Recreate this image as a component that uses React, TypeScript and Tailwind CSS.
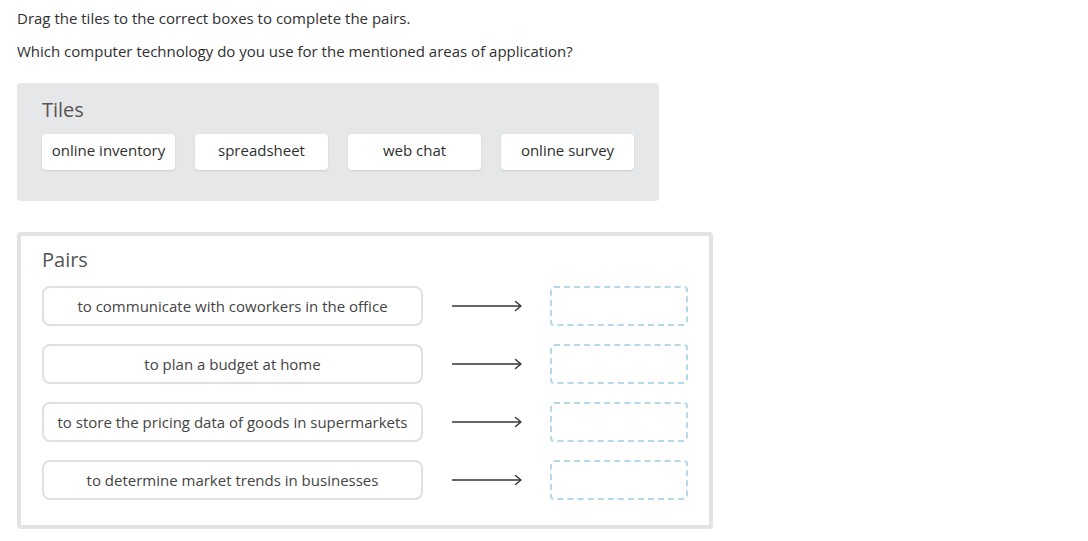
import React from 'react';

const tiles = ['online inventory', 'spreadsheet', 'web chat', 'online survey'];

const pairs = [
  'to communicate with coworkers in the office',
  'to plan a budget at home',
  'to store the pricing data of goods in supermarkets',
  'to determine market trends in businesses',
];

function Arrow() {
  return (
    <svg width="70" height="12" viewBox="0 0 70 12" fill="none" className="shrink-0">
      <path d="M0 6 H69" stroke="#333" strokeWidth="1.3" />
      <path d="M63.5 1.5 L69 6 L63.5 10.5" stroke="#333" strokeWidth="1.4" strokeLinecap="round" strokeLinejoin="round" />
    </svg>
  );
}

export default function App() {
  return (
    <div
      className="min-h-[541px] bg-white px-[17px] pt-[8px] text-[#2f2f2f]"
      style={{ fontFamily: '"Open Sans", "Liberation Sans", sans-serif' }}
    >
      <p className="text-[15px] leading-[20px]">Drag the tiles to the correct boxes to complete the pairs.</p>
      <p className="mt-[13px] text-[15px] leading-[20px]">
        Which computer technology do you use for the mentioned areas of application?
      </p>

      {/* Tiles */}
      <div className="mt-[22px] w-[642px] rounded-[4px] bg-[#e6e7e8] pl-[25px] pt-[13px] pb-[31px]">
        <h2 className="text-[20px] leading-[28px] text-[#555]">Tiles</h2>
        <div className="mt-[10px] flex gap-[20px]">
          {tiles.map((t) => (
            <div
              key={t}
              className="flex h-[36px] w-[133px] items-center justify-center rounded-[4px] bg-white pb-[3px] text-[15px] text-[#2f2f2f] shadow-[0_1px_2px_rgba(0,0,0,0.12)]"
            >
              {t}
            </div>
          ))}
        </div>
      </div>

      {/* Pairs */}
      <div className="mt-[31px] h-[297px] w-[696px] rounded-[4px] border-[4px] border-[#e3e3e3] bg-white pl-[21px] pt-[10px]">
        <h2 className="text-[20px] leading-[28px] text-[#555]">Pairs</h2>
        <div className="mt-[12px] flex flex-col gap-[18px]">
          {pairs.map((p) => (
            <div key={p} className="flex items-center">
              <div className="flex h-[40px] w-[381px] items-center justify-center rounded-[8px] border-2 border-[#e0e0e0] text-[15px] text-[#444]">
                {p}
              </div>
              <div className="ml-[29px] mr-[28px] flex items-center">
                <Arrow />
              </div>
              <div className="h-[40px] w-[138px] rounded-[4px] border-2 border-dashed border-[#b5d8ea]" />
            </div>
          ))}
        </div>
      </div>
    </div>
  );
}
